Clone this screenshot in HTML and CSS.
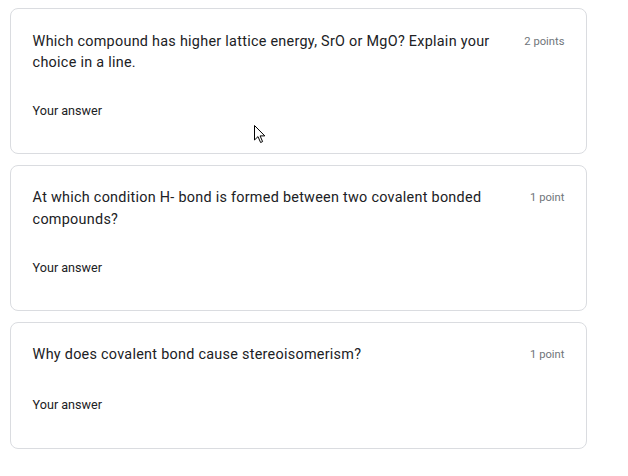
FILE: index.html
```html
<!DOCTYPE html>
<html>
<head>
<meta charset="utf-8">
<link rel="stylesheet" href="styles.css">
</head>
<body>
<div class="form">
  <div class="card">
    <div class="head">
      <div class="question">Which compound has higher lattice energy, SrO or MgO? Explain your choice in a line.</div>
      <div class="points">2 points</div>
    </div>
    <div class="answer">Your answer</div>
    <svg class="cursor" width="13" height="20" viewBox="0 0 13 20"><path d="M1.5 1.5 L1.5 16 L5 12.6 L7.6 18.5 L9.6 17.6 L7.1 11.9 L11.8 11.9 Z" fill="#fff" stroke="#000" stroke-width="1" stroke-linejoin="miter"/></svg>
  </div>
  <div class="card">
    <div class="head">
      <div class="question">At which condition H- bond is formed between two covalent bonded compounds?</div>
      <div class="points">1 point</div>
    </div>
    <div class="answer">Your answer</div>
  </div>
  <div class="card card-short">
    <div class="head">
      <div class="question">Why does covalent bond cause stereoisomerism?</div>
      <div class="points">1 point</div>
    </div>
    <div class="answer">Your answer</div>
  </div>
</div>
</body>
</html>
```
FILE: styles.css
```css
html, body {
  margin: 0;
  padding: 0;
  background: #ffffff;
}
.form {
  display: flex;
  flex-direction: column;
  gap: 11px;
  padding: 8px 0 0 10px;
  width: 577px;
}
.card {
  position: relative;
  border: 1px solid #dadce0;
  border-radius: 8px;
  padding: 21.6px 21.6px 32px 21.6px;
  background: #fff;
}
.card-short {
  padding-bottom: 33px;
}
.card-short .answer {
  margin-top: 29px;
}
.head {
  display: flex;
  align-items: flex-start;
}
.question {
  flex: 1;
  font-family: Roboto, "Liberation Sans", sans-serif;
  font-size: 14.4px;
  line-height: 21.6px;
  letter-spacing: 0.27px;
  color: #202124;
}
.points {
  padding-left: 21.6px;
  font-family: Roboto, "Liberation Sans", sans-serif;
  font-size: 11.2px;
  line-height: 21.6px;
  color: #70757a;
  white-space: nowrap;
}
.answer {
  margin-top: 27px;
  font-family: Roboto, "Liberation Sans", sans-serif;
  font-size: 12.6px;
  line-height: 20px;
  color: #202124;
}
.cursor {
  position: absolute;
  left: 242px;
  top: 115px;
}
```
